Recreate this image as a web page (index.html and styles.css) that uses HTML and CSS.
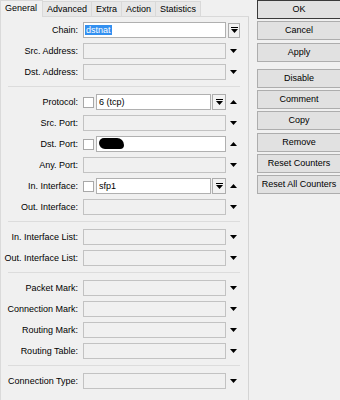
FILE: index.html
```html
<!DOCTYPE html>
<html>

<head>
    <title>Firewall Rule</title>
    <meta charset="utf-8">
    <link rel="stylesheet" href="styles.css">
</head>

<body>
    <div class="window">
        <div class="left">
            <div class="tabs">
                <div class="tab active">General</div>
                <div class="tab">Advanced</div>
                <div class="tab">Extra</div>
                <div class="tab">Action</div>
                <div class="tab">Statistics</div>
            </div>

            <div class="page">
                <div class="row">
                    <label>Chain:</label>
                    <div class="ctrl"><div class="field"><span class="sel">dstnat</span></div></div>
                    <div class="aside">
                        <span class="combo side">
                            <svg width="7" height="6" viewBox="0 0 7 6"><rect x="0" y="0" width="7" height="1" fill="#000"/><polygon points="0,2 7,2 3.5,6" fill="#000"/></svg>
                        </span>
                    </div>
                </div>
                <div class="row">
                    <label>Src. Address:</label>
                    <div class="ctrl"><div class="field off"></div></div>
                    <div class="aside"><svg width="7" height="4" viewBox="0 0 7 4"><polygon points="0,0 7,0 3.5,4" fill="#000"/></svg></div>
                </div>
                <div class="row">
                    <label>Dst. Address:</label>
                    <div class="ctrl"><div class="field off"></div></div>
                    <div class="aside"><svg width="7" height="4" viewBox="0 0 7 4"><polygon points="0,0 7,0 3.5,4" fill="#000"/></svg></div>
                </div>

                <div class="sep"></div>

                <div class="row">
                    <label>Protocol:</label>
                    <div class="ctrl">
                        <span class="check"></span>
                        <div class="field">6 (tcp)</div>
                        <span class="combo">
                            <svg width="7" height="6" viewBox="0 0 7 6"><rect x="0" y="0" width="7" height="1" fill="#000"/><polygon points="0,2 7,2 3.5,6" fill="#000"/></svg>
                        </span>
                    </div>
                    <div class="aside"><svg width="7" height="4" viewBox="0 0 7 4"><polygon points="0,4 7,4 3.5,0" fill="#000"/></svg></div>
                </div>
                <div class="row">
                    <label>Src. Port:</label>
                    <div class="ctrl"><div class="field off"></div></div>
                    <div class="aside"><svg width="7" height="4" viewBox="0 0 7 4"><polygon points="0,0 7,0 3.5,4" fill="#000"/></svg></div>
                </div>
                <div class="row">
                    <label>Dst. Port:</label>
                    <div class="ctrl">
                        <span class="check"></span>
                        <div class="field"><span class="blot"></span></div>
                    </div>
                    <div class="aside"><svg width="7" height="4" viewBox="0 0 7 4"><polygon points="0,4 7,4 3.5,0" fill="#000"/></svg></div>
                </div>
                <div class="row">
                    <label>Any. Port:</label>
                    <div class="ctrl"><div class="field off"></div></div>
                    <div class="aside"><svg width="7" height="4" viewBox="0 0 7 4"><polygon points="0,0 7,0 3.5,4" fill="#000"/></svg></div>
                </div>
                <div class="row">
                    <label>In. Interface:</label>
                    <div class="ctrl">
                        <span class="check"></span>
                        <div class="field">sfp1</div>
                        <span class="combo">
                            <svg width="7" height="6" viewBox="0 0 7 6"><rect x="0" y="0" width="7" height="1" fill="#000"/><polygon points="0,2 7,2 3.5,6" fill="#000"/></svg>
                        </span>
                    </div>
                    <div class="aside"><svg width="7" height="4" viewBox="0 0 7 4"><polygon points="0,4 7,4 3.5,0" fill="#000"/></svg></div>
                </div>
                <div class="row">
                    <label>Out. Interface:</label>
                    <div class="ctrl"><div class="field off"></div></div>
                    <div class="aside"><svg width="7" height="4" viewBox="0 0 7 4"><polygon points="0,0 7,0 3.5,4" fill="#000"/></svg></div>
                </div>

                <div class="sep"></div>

                <div class="row">
                    <label>In. Interface List:</label>
                    <div class="ctrl"><div class="field off"></div></div>
                    <div class="aside"><svg width="7" height="4" viewBox="0 0 7 4"><polygon points="0,0 7,0 3.5,4" fill="#000"/></svg></div>
                </div>
                <div class="row">
                    <label>Out. Interface List:</label>
                    <div class="ctrl"><div class="field off"></div></div>
                    <div class="aside"><svg width="7" height="4" viewBox="0 0 7 4"><polygon points="0,0 7,0 3.5,4" fill="#000"/></svg></div>
                </div>

                <div class="sep"></div>

                <div class="row">
                    <label>Packet Mark:</label>
                    <div class="ctrl"><div class="field off"></div></div>
                    <div class="aside"><svg width="7" height="4" viewBox="0 0 7 4"><polygon points="0,0 7,0 3.5,4" fill="#000"/></svg></div>
                </div>
                <div class="row">
                    <label>Connection Mark:</label>
                    <div class="ctrl"><div class="field off"></div></div>
                    <div class="aside"><svg width="7" height="4" viewBox="0 0 7 4"><polygon points="0,0 7,0 3.5,4" fill="#000"/></svg></div>
                </div>
                <div class="row">
                    <label>Routing Mark:</label>
                    <div class="ctrl"><div class="field off"></div></div>
                    <div class="aside"><svg width="7" height="4" viewBox="0 0 7 4"><polygon points="0,0 7,0 3.5,4" fill="#000"/></svg></div>
                </div>
                <div class="row">
                    <label>Routing Table:</label>
                    <div class="ctrl"><div class="field off"></div></div>
                    <div class="aside"><svg width="7" height="4" viewBox="0 0 7 4"><polygon points="0,0 7,0 3.5,4" fill="#000"/></svg></div>
                </div>

                <div class="sep"></div>

                <div class="row">
                    <label>Connection Type:</label>
                    <div class="ctrl"><div class="field off"></div></div>
                    <div class="aside"><svg width="7" height="4" viewBox="0 0 7 4"><polygon points="0,0 7,0 3.5,4" fill="#000"/></svg></div>
                </div>
            </div>
        </div>

        <div class="buttons">
            <div class="btn default">OK</div>
            <div class="btn">Cancel</div>
            <div class="btn">Apply</div>
            <div class="btn group">Disable</div>
            <div class="btn">Comment</div>
            <div class="btn">Copy</div>
            <div class="btn">Remove</div>
            <div class="btn">Reset Counters</div>
            <div class="btn">Reset All Counters</div>
        </div>
    </div>
</body>

</html>
```

FILE: styles.css
```css
body {
    margin: 0;
    background-color: #f0f0f0;
    color: #000;
    font-family: "Liberation Sans", Arial, sans-serif;
    font-size: 9px;
}

.window {
    display: flex;
    width: 340px;
    height: 400px;
    overflow: hidden;
}

/* partie gauche : onglets + formulaire */
.left {
    width: 249px;
    flex: none;
    display: flex;
    flex-direction: column;
}

.tabs {
    display: flex;
    height: 16px;
    border-bottom: 1px solid #d9d9d9;
}

.tab {
    height: 15px;
    margin-top: 1px;
    padding: 0 4px;
    box-sizing: border-box;
    line-height: 14px;
    background-color: #e8e8e8;
    border: 1px solid #d9d9d9;
    border-bottom: none;
    margin-right: -1px;
}

.tab.active {
    height: 17px;
    margin-top: 0;
    padding: 0 5px 0 4px;
    line-height: 15px;
    background-color: #f0f0f0;
}

.page {
    flex: 1;
    display: flex;
    flex-direction: column;
    gap: 5px;
    padding-top: 5px;
    border-left: 1px solid #dadada;
    border-right: 1px solid #d4d4d4;
}

.sep {
    height: 0;
    border-top: 1px solid #dcdcdc;
    margin: 1px 8px 2px 7px;
}

.row {
    display: flex;
    align-items: center;
    height: 16px;
}

.row label {
    width: 77px;
    margin-right: 5px;
    flex: none;
    text-align: right;
    white-space: nowrap;
}

.ctrl {
    width: 143px;
    height: 16px;
    flex: none;
    display: flex;
    align-items: center;
}

.aside {
    width: 15px;
    flex: none;
    display: flex;
    justify-content: center;
    align-items: center;
}

.field {
    flex: 1;
    height: 16px;
    box-sizing: border-box;
    padding: 0 2px;
    line-height: 14px;
    background-color: #fff;
    border: 1px solid #b0b0b0;
    white-space: nowrap;
    overflow: hidden;
}

.field.off {
    background-color: #f0f0f0;
    border-color: #c2c2c2;
}

.sel {
    background-color: #3390f0;
    color: #fff;
    margin-left: -1px;
    padding: 0 1px;
}

/* trace noire qui masque le port */
.blot {
    display: inline-block;
    width: 25px;
    height: 11px;
    margin-top: 1px;
    vertical-align: top;
    background-color: #000;
    border-radius: 5px 7px 4px 6px;
}

.check {
    width: 11px;
    height: 11px;
    flex: none;
    box-sizing: border-box;
    margin-right: 2px;
    background-color: #fff;
    border: 1px solid #a8a8a8;
}

.combo {
    width: 14px;
    height: 16px;
    flex: none;
    margin-left: 1px;
    box-sizing: border-box;
    display: flex;
    justify-content: center;
    align-items: center;
    background-color: #f2f2f2;
    border: 1px solid #adadad;
}

.combo.side {
    width: 12px;
    height: 15px;
    margin-left: 1px;
}

/* boutons à droite */
.buttons {
    width: 84px;
    flex: none;
    margin-left: 8px;
    display: flex;
    flex-direction: column;
    gap: 2.3px;
}

.btn {
    height: 19px;
    box-sizing: border-box;
    line-height: 17px;
    text-align: center;
    background-color: #e1e1e1;
    border: 1px solid #adadad;
    white-space: nowrap;
}

.btn.default {
    border-color: #3a3a3a;
}

.btn.group {
    margin-top: 5px;
}
```
